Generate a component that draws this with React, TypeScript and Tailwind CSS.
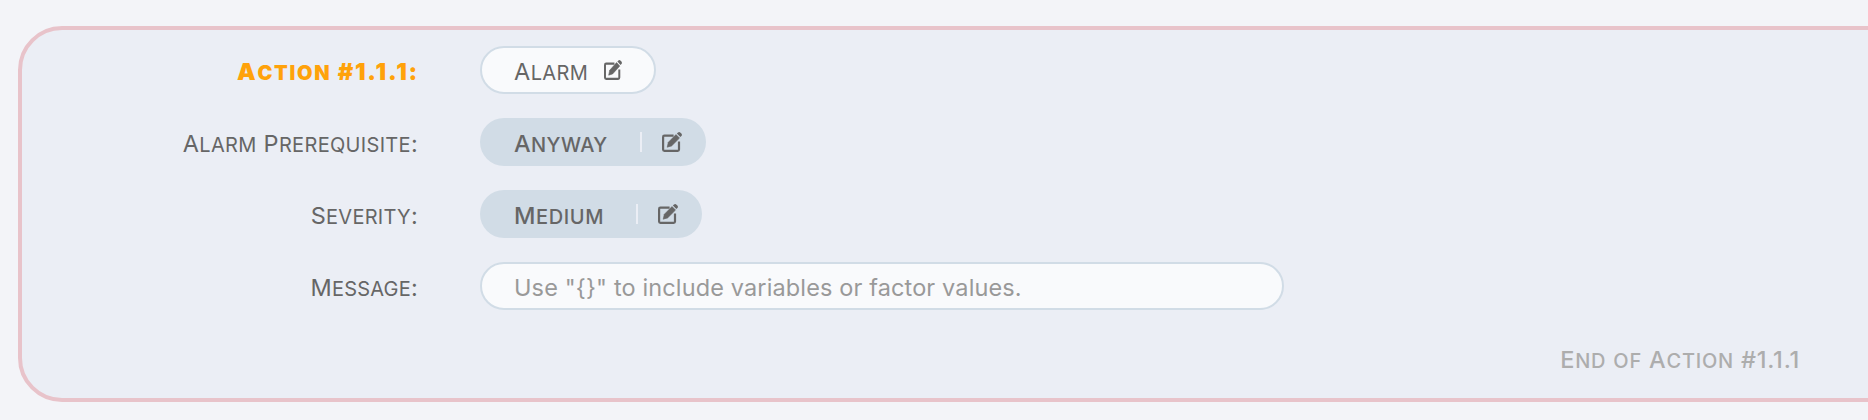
import React from "react";

function SmallCaps({ text }: { text: string }) {
  return (
    <>
      {text.split(/([a-z]+)/).map((part, i) =>
        i % 2 ? (
          <span key={i} className="text-[20px] uppercase">{part}</span>
        ) : (
          <span key={i}>{part}</span>
        ),
      )}
    </>
  );
}

function EditIcon({ cls }: { cls: string }) {
  return (
    <svg viewBox="0 0 20 20" preserveAspectRatio="none" className={`block h-5 shrink-0 ${cls}`} fill="none">
      <path d="M11.6 3.6H2.4Q1.1 3.6 1.1 4.9V17.6Q1.1 18.9 2.4 18.9H15.7Q17 18.9 17 17.6V9.6" stroke="currentColor" strokeWidth="2.2" />
      <path d="M14 2.6 17.5 6.1 9.6 13.9 5.2 15.2 6.3 10.3Z" fill="currentColor" stroke="currentColor" strokeWidth=".6" strokeLinejoin="round" />
      <path d="M14.9 1.6 16 .6Q17.2-.4 18.5.7L19.4 1.6Q20.5 2.9 19.4 4.1L18.4 5.1Z" fill="currentColor" />
    </svg>
  );
}

function Label({ text, cls }: { text: string; cls: string }) {
  return (
    <div className={`flex shrink-0 justify-end pt-[2px] leading-12 whitespace-pre ${cls}`}>
      <div>
        <SmallCaps text={text} />
      </div>
    </div>
  );
}

export default function App() {
  return (
    <div className="h-[420px] overflow-hidden bg-[#f3f4f8] pt-[26px] pl-[18px] font-['Inter',sans-serif] text-[23.5px] text-[#666666]">
      <div className="flex h-[376px] w-[1900px] flex-col gap-6 rounded-[44px] border-4 border-[#e8c3ca] bg-[#ebeef5] py-4">
        <div className="flex h-12">
          <Label text="Action #1.1.1:" cls="mr-[61px] w-[397px] font-black tracking-[1.7px] text-[#ffa20a]" />
          <div className="flex w-44 items-center rounded-full border-2 border-[#d1dce6] bg-[#f9fafc] pl-8 whitespace-pre">
            <div className="w-[90px] pt-[3px] tracking-[0.4px]"><SmallCaps text="Alarm" /></div>
            <EditIcon cls="w-[18px]" />
          </div>
        </div>
        <div className="flex h-12">
          <Label text="Alarm Prerequisite:" cls="mr-[62px] w-[396px] tracking-[0.32px]" />
          <div className="flex w-[226px] items-center rounded-full bg-[#d1dce6] pl-[34px] font-medium whitespace-pre">
            <div className="w-[126px] pt-[3px] tracking-[0.4px]"><SmallCaps text="Anyway" /></div>
            <div className="mr-[20px] h-5 w-0.5 bg-[#ebeef5]" />
            <EditIcon cls="w-5" />
          </div>
        </div>
        <div className="flex h-12">
          <Label text="Severity:" cls="mr-[62px] w-[396px] tracking-[0.28px]" />
          <div className="flex w-[222px] items-center rounded-full bg-[#d1dce6] pl-[34px] font-medium whitespace-pre">
            <div className="w-[122px] pt-[3px] tracking-[0.6px]"><SmallCaps text="Medium" /></div>
            <div className="mr-[20px] h-5 w-0.5 bg-[#ebeef5]" />
            <EditIcon cls="w-5" />
          </div>
        </div>
        <div className="flex h-12">
          <Label text="Message:" cls="mr-[62px] w-[396px] tracking-[0.22px]" />
          <div className="flex w-[804px] items-center rounded-full border-2 border-[#d1dce6] bg-[#f9fafc] pl-8 whitespace-pre text-[#999999]">
            <div className="pt-[3px] tracking-[0.13px]">Use "{"{}"}" to include variables or factor values.</div>
          </div>
        </div>
        <div className="flex h-12 w-[1778px] items-center justify-end font-medium tracking-[0.77px] whitespace-pre text-[#adadad]">
          <div className="pt-[3px]"><SmallCaps text="End of Action #1.1.1" /></div>
        </div>
      </div>
    </div>
  );
}
